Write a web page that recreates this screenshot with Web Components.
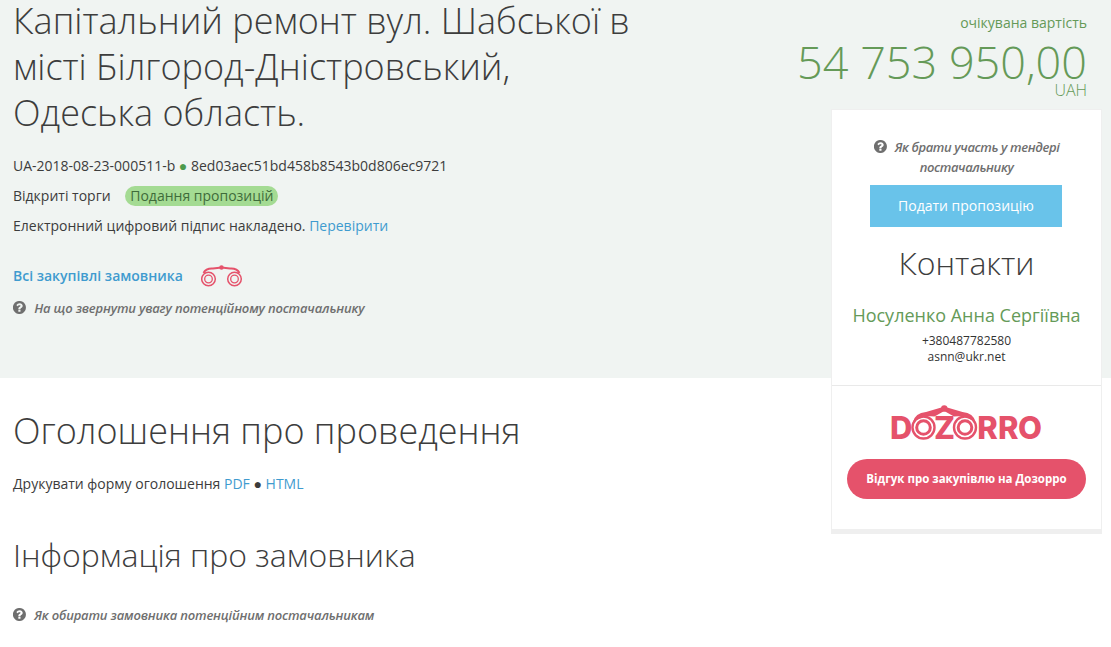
<!DOCTYPE html>
<html lang="uk"><head><meta charset="utf-8"><title>Tender</title>
<style>html,body{margin:0;padding:0;background:#fff}body{font-family:"Open Sans",sans-serif;overflow:hidden;height:647px}</style>
</head><body>
<tender-page></tender-page>
<template id="hint-t"><style>
:host{display:block;font:italic 600 13px/20px "Open Sans",sans-serif;color:#6f6f6f;letter-spacing:-.17px}
svg{width:13px;height:13px;fill:#6f6f6f;vertical-align:-1px;margin-right:5px}
</style><svg viewBox="150 130 1512 1532"><path d="M1024 1376v-192q0-14-9-23t-23-9h-192q-14 0-23 9t-9 23v192q0 14 9 23t23 9h192q14 0 23-9t9-23zm256-672q0-88-55.5-163t-138.5-116-170-41q-243 0-371 213-15 24 8 42l132 100q7 6 19 6 16 0 25-12 53-68 86-92 34-24 86-24 48 0 85.5 26t37.5 59q0 38-20 61t-68 45q-63 28-115.5 86.5t-52.5 125.5v36q0 14 9 23t23 9h192q14 0 23-9t9-23q0-19 21.5-49.5t54.5-49.5q32-18 49-28.5t46-35 44.5-48 28-60.5 12.5-81zm384 192q0 209-103 385.5t-279.5 279.5-385.5 103-385.5-103-279.5-279.5-103-385.5 103-385.5 279.5-279.5 385.5-103 385.5 103 279.5 279.5 103 385.5z"/></svg> <slot></slot></template>

<template id="logo-t"><style>
:host{display:block;position:relative;width:152px;height:40px;margin:0 0 0 43px}
.w{position:absolute;left:0;top:9px;font:800 31px/30px Inter,sans-serif;color:#e5526b;display:grid;grid-template-columns:22px 22px 20px 23px 21px 20px 24px;text-align:center}
.w .h{font-size:22px}
svg{position:absolute;left:0;top:0;width:152px;height:40px;overflow:visible}
</style><div class="w"><span>D</span><span class="h">O</span><span>Z</span><span class="h">O</span><span>R</span><span>R</span><span>O</span></div>
<svg viewBox="0 0 152 40" fill="none"><circle cx="33.500" cy="23.500" r="11" stroke="#e5526b" stroke-width="2.400" fill="#fff"/><circle cx="33.500" cy="23.500" r="6.800" stroke="#e5526b" stroke-width="3"/><circle cx="75" cy="23.500" r="11" stroke="#e5526b" stroke-width="2.400" fill="#fff"/><circle cx="75" cy="23.500" r="6.800" stroke="#e5526b" stroke-width="3"/><path fill="#e5526b" d="M23 18Q25 9 36 8L53 3L55.500 3L72.500 8Q83.500 9 85.500 18Q75 11 64 12.500L54.250 7L44.500 12.500Q34 11 23 18Z"/><circle cx="54.250" cy="4.500" r="3.200" fill="#e5526b"/></svg></template>

<template id="card-t"><style>
:host{display:block;box-sizing:border-box;width:271px;height:425px;background:#fff;border:solid #efefef;border-width:1px 1px 5px 1px;text-align:center;font-family:"Open Sans",sans-serif}
.top{height:276px;box-sizing:border-box;padding:27px 38px 0;border-bottom:1px solid #e9e9e9}
tender-hint{text-align:center;margin:0 -4px;letter-spacing:-.38px}
.btn{display:block;width:192px;height:42px;line-height:42px;margin:8px 0 0;background:#69c3ea;color:#fff;font-size:14px;text-decoration:none}
h2{font:300 32px/44px "Open Sans",sans-serif;color:#3d3d3d;margin:14px -30px 0}
.name{font-size:18px;line-height:24px;color:#659a58;margin:18px -30px 0}
.ph{font-size:12px;line-height:16px;color:#333;margin-top:6px}
.bot{padding:18px 15px 0}
.fb{display:block;height:40px;line-height:40px;border-radius:20px;background:#e5526b;color:#fff;font-size:11.500px;font-weight:700;text-decoration:none;margin-top:15px;width:239px}
</style><div class="top"><tender-hint>Як брати участь у тендері постачальнику</tender-hint><a class="btn">Подати пропозицію</a><h2>Контакти</h2><div class="name">Носуленко Анна Сергіївна</div><div class="ph">+380487782580<br>asnn@ukr.net</div></div>
<div class="bot"><dozorro-logo></dozorro-logo><a class="fb">Відгук про закупівлю на Дозорро</a></div></template>

<template id="page-t"><style>
:host{display:grid;grid-template-columns:1fr 280px;grid-template-rows:378px auto;font:14px/20px "Open Sans",sans-serif;color:#3c3c3c;width:1111px}
.band{grid-area:1/1/2/3;background:#f0f4f2}
.lead{grid-area:1/1/2/2;padding:0 0 0 13px}
h1{font:300 36px/42px "Open Sans",sans-serif;color:#3d3d3d;margin:0;display:flex;flex-direction:column;gap:4px}
.lead p{margin:0}.id{margin-top:22px!important;font-size:14px}
.g{color:#4c9a4c}
.row{margin-top:10px!important}
.st{display:inline-block;background:#a4db93;border-radius:10px;padding:0 5px;margin-left:11px;color:#3f6b3a}
a{color:#3f9bcf;text-decoration:none}
.all{margin-top:28px!important;display:flex;align-items:center;gap:18px;font-weight:600;height:24px}
.all svg{width:42px;height:22px;margin-top:-1px}
.lead tender-hint{margin-top:10px}
.aside{grid-area:1/2/3/3}
.price{height:109px;margin:0 24px 0 -100px;text-align:right;color:#659a58;white-space:nowrap}
.lbl{padding-top:13px;font-size:14px;line-height:20px}
.num{font:300 45px/44px "Open Sans",sans-serif;margin-top:7px}
.cur{font:300 16px/12px "Open Sans",sans-serif}
.low{grid-area:2/1/3/2;padding-left:13px}
h2{font:300 36px/46px "Open Sans",sans-serif;color:#3d3d3d;margin:30px 0 0}
h3{font:300 32px/42px "Open Sans",sans-serif;color:#3d3d3d;margin:40px 0 0}
.pr{margin:20px 0 0}
.low tender-hint{margin-top:29px}
</style>
<div class="band"></div>
<div class="lead">
<h1><span>Капітальний ремонт вул. Шабської в</span> <span>місті Білгород-Дністровський,</span> <span>Одеська область.</span></h1>
<p class="id">UA-2018-08-23-000511-b <span class="g">●</span> 8ed03aec51bd458b8543b0d806ec9721</p>
<p class="row">Відкриті торги <span class="st">Подання пропозицій</span></p>
<p class="row">Електронний цифровий підпис накладено. <a>Перевірити</a></p>
<p class="all"><a>Всі закупівлі замовника</a><svg viewBox="0 0 42 22" fill="none" stroke="#e5526b"><circle cx="7.500" cy="14" r="6.800" stroke-width="1.500"/><circle cx="7.500" cy="14" r="3.800" stroke-width="1.300"/><circle cx="33.500" cy="14" r="6.800" stroke-width="1.500"/><circle cx="33.500" cy="14" r="3.800" stroke-width="1.300"/><path d="M2.500 8Q5 3 12 3.500L20.500 2.500M38.500 8Q36 3 29 3.500L20.500 2.500" stroke-width="2"/><circle cx="20.500" cy="2.500" r="2.200" fill="#e5526b" stroke="none"/></svg></p>
<tender-hint>На що звернути увагу потенційному постачальнику</tender-hint>
</div>
<div class="aside"><div class="price"><div class="lbl">очікувана вартість</div><div class="num">54 753 950,00</div><div class="cur">UAH</div></div><tender-card></tender-card></div>
<div class="low"><h2>Оголошення про проведення</h2><p class="pr">Друкувати форму оголошення <a>PDF</a> ● <a>HTML</a></p><h3>Інформація про замовника</h3><tender-hint>Як обирати замовника потенційним постачальникам</tender-hint></div>
</template>
<script>
const def=(n,t)=>customElements.define(n,class extends HTMLElement{constructor(){super();this.attachShadow({mode:'open'}).append(document.getElementById(t).content.cloneNode(true))}});
def('tender-hint','hint-t');def('dozorro-logo','logo-t');def('tender-card','card-t');def('tender-page','page-t');
</script>
</body></html>
